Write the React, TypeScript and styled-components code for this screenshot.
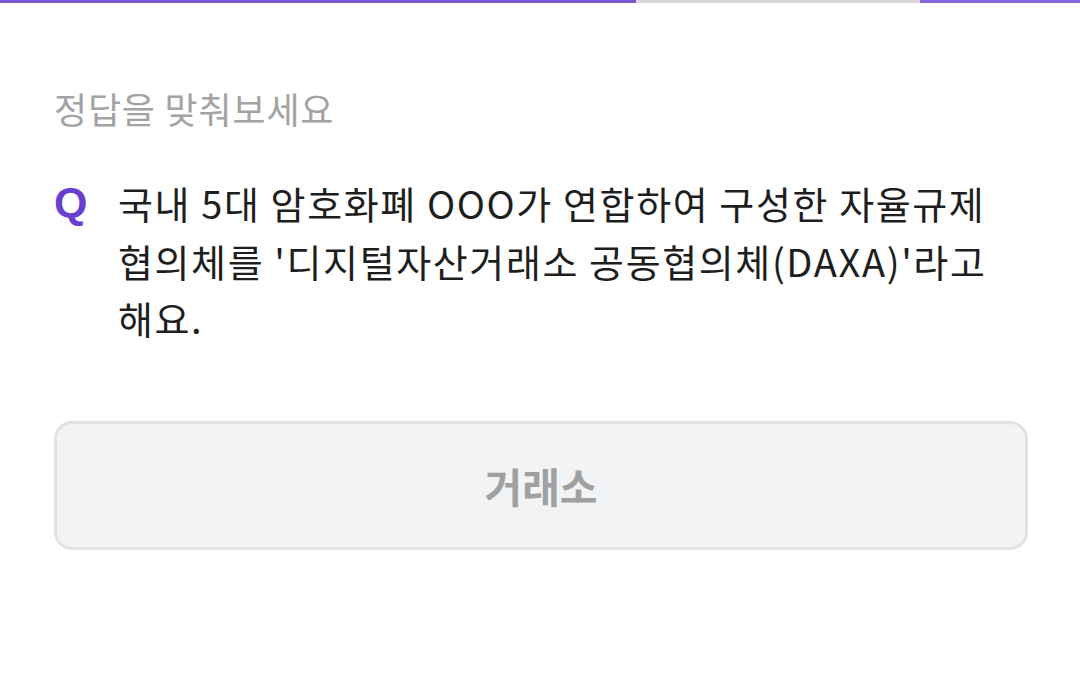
import React from "react";
import styled, { createGlobalStyle } from "styled-components";

const Global = createGlobalStyle`
  html, body { margin: 0; padding: 0; background: #ffffff; }
  body { font-family: "Noto Sans CJK KR", "Noto Sans", sans-serif; }
`;

const Page = styled.div`
  width: 1080px;
  height: 689px;
  display: flex;
  flex-direction: column;
  background: #fff;
  overflow: hidden;
`;

const Progress = styled.div`
  display: flex;
  height: 3px;
  width: 100%;
`;

const Seg = styled.div<{ $w: number; $c: string }>`
  width: ${(p) => p.$w}px;
  background: ${(p) => p.$c};
`;

const Content = styled.div`
  padding: 83px 52px 0 54px;
  display: flex;
  flex-direction: column;
`;

const Hint = styled.div`
  font-size: 36px;
  color: #a3a3a3;
  line-height: 44px;
  letter-spacing: 0.8px;
`;

const QRow = styled.div`
  display: flex;
  margin-top: 44px;
`;

const QMark = styled.div`
  width: 64px;
  flex: none;
  font-family: "Liberation Sans", Arial, sans-serif;
  font-weight: 700;
  font-size: 43px;
  color: #6a3fd0;
  line-height: 57px;
`;

const QText = styled.div`
  font-size: 38px;
  line-height: 57.5px;
  letter-spacing: 1.6px;
  color: #1e1e1e;
  width: 910px;
  word-break: keep-all;
`;

const Answer = styled.div`
  box-sizing: border-box;
  margin-top: 74px;
  height: 129px;
  width: 974px;
  border: 3px solid #e1e2e4;
  border-radius: 18px;
  background: #f2f3f5;
  display: flex;
  align-items: center;
  justify-content: center;
  font-size: 41px;
  font-weight: 700;
  color: #a0a0a0;
`;

export default function App() {
  return (
    <Page>
      <Global />
      <Progress>
        <Seg $w={636} $c="#7b55d6" />
        <Seg $w={284} $c="#d8d8d8" />
        <Seg $w={160} $c="#8a66dc" />
      </Progress>
      <Content>
        <Hint>정답을 맞춰보세요</Hint>
        <QRow>
          <QMark>Q</QMark>
          <QText>
            국내 5대 암호화폐 OOO가 연합하여 구성한 자율규제 협의체를 '디지털자산거래소 공동협의체(DAXA)'라고 해요.
          </QText>
        </QRow>
        <Answer>거래소</Answer>
      </Content>
    </Page>
  );
}
